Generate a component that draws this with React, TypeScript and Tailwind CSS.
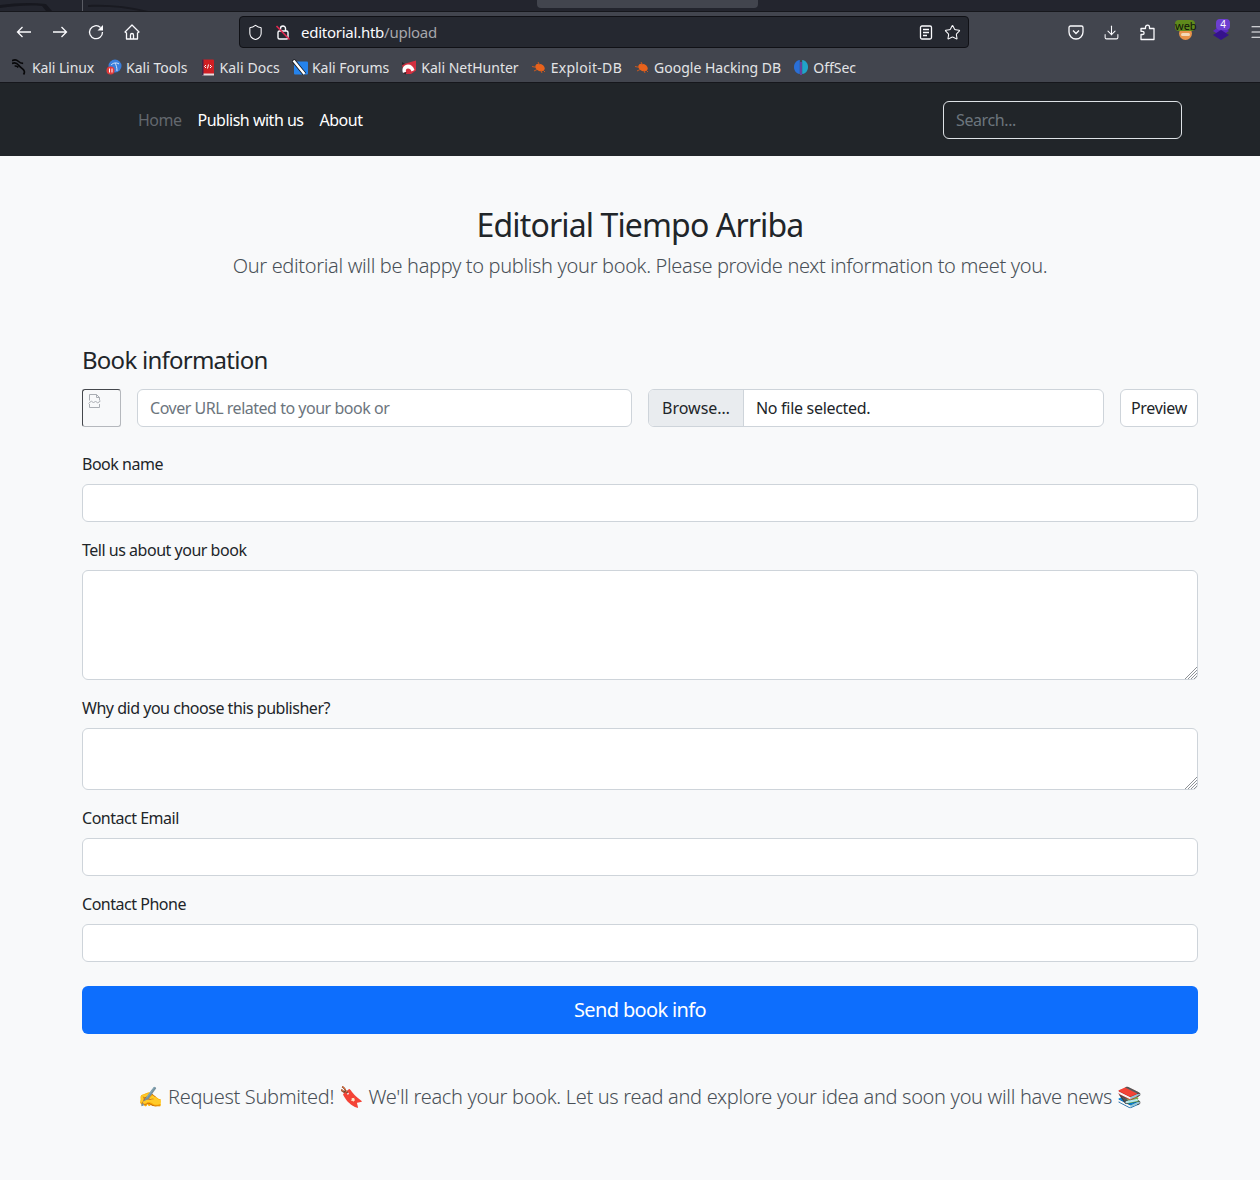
import React from 'react';
import { Shield, Star, Download, Menu } from 'lucide-react';

const uiFont = "font-['Noto_Sans',sans-serif]";

const KaliDragon = () => (
  <svg width="18" height="18" viewBox="0 0 18 18" fill="none">
    <path d="M0 2c2.500-1.500 5.500-1 7 .5 1.500 1.500 3 2.500 5.500 2.500M0 5c3-1.200 5.500-.5 7.500 2 1.500 2.500 4.500 3.500 6 6 .8 1.500.5 3-.5 4.500M3 8c1.500-.3 3 .2 4 1.500" stroke="#08080a" strokeWidth="1.900" />
  </svg>
);

const ToolsIcon = () => (
  <svg width="16" height="16" viewBox="0 0 16 16">
    <circle cx="9" cy="7" r="6.500" fill="#3a7fdc" />
    <path d="M5 6c2-2 5-3 8-1M9 4c1 2 2 4 2 8" stroke="#d6e6fa" strokeWidth="1" fill="none" />
    <circle cx="4.500" cy="11.500" r="4" fill="#e23b3b" />
    <rect x="3" y="9.500" width="1" height="4" fill="#fff" />
    <rect x="5.500" y="9.500" width="1" height="4" fill="#fff" />
  </svg>
);

const DocsIcon = () => (
  <svg width="14" height="17" viewBox="0 0 14 17">
    <rect x="1" y="0.500" width="12" height="15" rx="1" fill="#cf1f24" />
    <rect x="1" y="14.500" width="12" height="2" fill="#e8dcdc" />
    <rect x="1" y="0.500" width="1.500" height="16" fill="#43264a" />
    <path d="M5 6l-1.500 1.500L5 9M9 6l1.500 1.500L9 9M7.500 5.500l-1 4" stroke="#fff" strokeWidth="1" fill="none" />
  </svg>
);

const ForumsIcon = () => (
  <svg width="16" height="17" viewBox="0 0 16 17">
    <rect x="2" y="2.500" width="14" height="13" rx="1" fill="#2583ec" />
    <path d="M1 1l11.500 14" stroke="#16181f" strokeWidth="4" />
    <path d="M1.500 1.500l11 13.500" stroke="#fff" strokeWidth="2.400" />
  </svg>
);

const HunterIcon = () => (
  <svg width="16" height="16" viewBox="0 0 16 16">
    <path d="M1 5.500L15 1.500v10L10 15H3z" fill="#d32f3f" />
    <path d="M2 14c-1.800-4.500 1-8.500 5-8.500 3 0 5.500 2 6.500 5.500l-3 1.500C10 10.800 8.800 9.500 7 9.500c-1.800 0-2.500 1.700-2 3.500z" fill="#fff" />
    <path d="M2 14l2.500 1.500L5.500 13z" fill="#25262c" />
    <path d="M1 3l3 2-3 1z" fill="#25262c" />
  </svg>
);

const BugIcon = () => (
  <svg width="16" height="14" viewBox="0 0 16 14">
    <ellipse cx="9" cy="7.500" rx="5" ry="3.500" fill="#e8621c" transform="rotate(25 9 7.500)" />
    <path d="M1 6.500l4 .8M3 11l3-1.500M7 2l1.500 3M11 13l-1-2.500M14 12l-2-2" stroke="#c9581f" strokeWidth="1" />
  </svg>
);

const OffSecIcon = () => (
  <svg width="16" height="16" viewBox="0 0 16 16">
    <path d="M6.800 1C3 1.500 1 4.500 1 8s2 6.500 5.800 7z" fill="#2a6fd6" />
    <path d="M9.200 1C13 1.500 15 4.500 15 8s-2 6.500-5.800 7z" fill="#21a3c9" />
    <rect x="7.400" y="3" width="1.200" height="13" fill="#7a3fd0" />
  </svg>
);

const Bookmark = ({ icon, label, labelClass }: { icon: React.ReactNode; label: string; labelClass?: string }) => (
  <div className="flex items-center gap-1 text-[14px] text-[#e3e4e6]">
    <span className="flex w-4 h-4 items-center justify-center">{icon}</span>
    <span className={labelClass}>{label}</span>
  </div>
);

const ResizeHandle = () => (
  <svg className="absolute right-[1px] bottom-[1px]" width="12" height="12" viewBox="0 0 12 12" fill="none">
    <path d="M0 12L12 0M3 12l9-9M6 12l6-6M9 12l3-3" stroke="#8d9196" />
  </svg>
);

const BrowserChrome = () => (
  <div className="text-[#fbfbfe]">
    {/* window strip behind the tabs, a bit of wallpaper shows */}
    <div className="h-[11px] bg-[#23252e] relative overflow-hidden">
      <svg className="absolute left-0 top-0" width="160" height="11" viewBox="0 0 160 11" fill="none">
        <path d="M0 5c15-2 30-3 46-1l6 7h-6L42 6C28 5 14 6 0 8z" fill="#17181f" />
        <path d="M88 5c20-1 40 1 60 6h-8C122 7 105 6 88 7z" fill="#191a21" />
      </svg>
      <div className="absolute left-[537px] top-0 w-[221px] h-2 bg-[#42454e] rounded-b" />
      <div className="absolute left-[82px] top-0 w-px h-[11px] bg-[#5a5c64]" />
    </div>
    <div className="h-[39px] pt-[2px] bg-[#42454e] border-t border-[#16171c] flex items-center relative">
      <div className="flex items-center gap-5 pl-4 w-[239px] shrink-0">
        <svg width="16" height="12" viewBox="0 0 16 12" fill="none" stroke="#fbfbfe" strokeWidth="1.300">
          <path d="M15 6H1.500M6.500 1l-5 5 5 5" />
        </svg>
        <svg width="16" height="12" viewBox="0 0 16 12" fill="none" stroke="#fbfbfe" strokeWidth="1.300">
          <path d="M1 6h13.500M9.500 1l5 5-5 5" />
        </svg>
        <svg width="16" height="16" viewBox="0 0 16 16" fill="none">
          <path d="M12.500 3.500A6.500 6.500 0 1 0 14.500 8" stroke="#fbfbfe" strokeWidth="1.300" />
          <path d="M15 1v5.500H9.500z" fill="#fbfbfe" />
        </svg>
        <svg width="16" height="16" viewBox="0 0 16 16" fill="none" stroke="#fbfbfe" strokeWidth="1.300">
          <path d="M1 8l7-7 7 7-1.500 1V15h-11V9zM6.500 15v-4a1.500 1.500 0 0 1 3 0v4" strokeLinejoin="round" />
        </svg>
      </div>
      <div className="w-[730px] h-8 shrink-0 bg-[#252830] border border-[#101116] rounded flex items-center pl-[7px] pr-[7px]">
        <Shield size={17} strokeWidth={1.500} />
        <svg className="ml-[11px]" width="16" height="17" viewBox="0 0 16 17" fill="none">
          <rect x="3" y="7" width="10" height="8" rx="1.500" stroke="#fbfbfe" strokeWidth="1.400" />
          <path d="M5.500 7V4.500a2.500 2.500 0 0 1 5 0V7" stroke="#fbfbfe" strokeWidth="1.400" />
          <path d="M1.500 2l13 13.500" stroke="#e22850" strokeWidth="1.600" />
        </svg>
        <span className="ml-[10px] text-[15px] tracking-[-0.25px] text-[#fbfbfe]">editorial.htb<span className="text-[#a5a6ab]">/upload</span></span>
        <svg className="ml-auto" width="14" height="15" viewBox="0 0 14 15" fill="none">
          <rect x="1.500" y="1" width="11" height="13" rx="1.500" stroke="#fbfbfe" strokeWidth="1.300" />
          <path d="M4 4.500h6M4 7.500h6M4 10.500h4" stroke="#fbfbfe" strokeWidth="1.300" />
        </svg>
        <Star className="ml-[11px]" size={17} strokeWidth={1.500} />
      </div>
      <div className="flex-1 flex items-center pl-[99px] gap-[19px]">
        <svg width="16" height="15" viewBox="0 0 16 15" fill="none">
          <path d="M2.500 1h11A1.500 1.500 0 0 1 15 2.500V7a7 7 0 0 1-14 0V2.500A1.500 1.500 0 0 1 2.500 1z" stroke="#fbfbfe" strokeWidth="1.300" />
          <path d="M5 5.500l3 3 3-3" stroke="#fbfbfe" strokeWidth="1.300" />
        </svg>
        <Download size={17} strokeWidth={1.500} />
        <svg width="17" height="17" viewBox="0 0 17 17" fill="none">
          <path d="M2 15.500v-5h1.500a1.600 1.600 0 0 0 0-3.200H2V4.500h4.500V3.200a2 2 0 0 1 4 0v1.300H15v11z" stroke="#fbfbfe" strokeWidth="1.300" strokeLinejoin="round" />
        </svg>
        <div className="relative w-5 h-5 ml-[1px]">
          <div className="absolute left-[3px] top-[5px] w-[13px] h-[13px] rounded-full bg-[#e8934a]" />
          <div className="absolute left-[5px] top-[11px] w-[9px] h-[3px] rounded-sm bg-[#f4d9b8]" />
          <div className="absolute left-[-1px] top-[-2px] w-5 h-[11px] rounded-sm bg-[#5f8a1c] text-[11px] leading-[11px] text-[#10140a] text-center">web</div>
        </div>
        <div className="relative w-5 h-5 ml-[-3px]">
          <svg className="absolute left-[-1px] top-[3px]" width="20" height="16" viewBox="0 0 20 16">
            <path d="M10 0l8 6-8 5-8-5z" fill="#5a2bc0" />
            <path d="M10 5l8 5-8 5-8-5z" fill="#35128c" />
          </svg>
          <div className="absolute left-[4px] top-[-3px] w-[14px] h-[11px] rounded-sm bg-[#6d3fd0] text-[10px] leading-[11px] text-white text-center">4</div>
        </div>
        <Menu className="ml-[-2px] shrink-0" size={18} strokeWidth={1.500} />
      </div>
    </div>
    <div className="h-[33px] pt-[2px] bg-[#42454e] border-b border-[#16171c] flex items-center pl-3 gap-3">
      <Bookmark icon={<KaliDragon />} label="Kali Linux" labelClass="tracking-[-0.1px]" />
      <Bookmark icon={<ToolsIcon />} label="Kali Tools" />
      <Bookmark icon={<DocsIcon />} label="Kali Docs" labelClass="tracking-[0.1px]" />
      <Bookmark icon={<ForumsIcon />} label="Kali Forums" />
      <Bookmark icon={<HunterIcon />} label="Kali NetHunter" />
      <Bookmark icon={<BugIcon />} label="Exploit-DB" labelClass="tracking-[0.3px]" />
      <Bookmark icon={<BugIcon />} label="Google Hacking DB" />
      <Bookmark icon={<OffSecIcon />} label="OffSec" />
    </div>
  </div>
);

const Field = ({ label, children }: { label: string; children: React.ReactNode }) => (
  <div className="mb-4">
    <label className="block mb-2 text-[16px] leading-6 tracking-[-0.48px] text-[#212529]">{label}</label>
    {children}
  </div>
);

const inputClass = 'block w-full h-[38px] bg-white border border-[#ced4da] rounded-md';

const App: React.FC = () => {
  return (
    <div className="w-[1260px] h-[1180px] overflow-hidden">
      <div className={`w-[1280px] min-h-[1180px] bg-[#f8f9fa] ${uiFont}`}>
        <BrowserChrome />

        <nav className="h-[73px] bg-[#212529] flex items-center pl-[130px] pr-[98px]">
          <div className="flex text-[16px] tracking-[-0.5px]">
            <a className="px-2 text-[#63686e]">Home</a>
            <a className="px-2 text-white">Publish with us</a>
            <a className="px-2 text-white">About</a>
          </div>
          <input
            className="ml-auto w-[239px] h-[38px] px-3 rounded-md border border-[#dee2e6] bg-transparent text-[16px] tracking-[-0.4px] placeholder:text-[#6c757d]"
            placeholder="Search..."
          />
        </nav>

        <div className="text-center pt-[48px]">
          <h1 className="text-[32px] leading-[42px] font-normal tracking-[-0.87px] text-[#212529]">Editorial Tiempo Arriba</h1>
          <p className="text-[20px] leading-[40px] font-light tracking-[-0.34px] text-[#495057]">
            Our editorial will be happy to publish your book. Please provide next information to meet you.
          </p>
        </div>

        <form className="mx-[82px] mt-[58px]">
          <h2 className="text-[24px] leading-[32px] font-normal tracking-[-0.75px] text-[#212529] mb-[13px]">Book information</h2>

          <div className="flex gap-4 mb-[25px]">
            <div className="w-[39px] h-[38px] shrink-0 rounded-[3px] border border-[#b5b8bd] border-l-[#44474c] border-t-[#44474c] pl-[5px] pt-[4px]">
              <svg width="13" height="14" viewBox="0 0 13 14" fill="none">
                <path d="M1.500 6.500V.5h7l3 3v3M1.500 10v3.500h10V10M8.500.5v3h3" stroke="#a9adb3" />
                <path d="M.5 9.500l3-2.500 2 2 2-2 2 2 3-2" stroke="#a9adb3" />
              </svg>
            </div>
            <input className={`${inputClass} !w-[495px] shrink-0 px-3 text-[16px] tracking-[-0.48px] placeholder:text-[#6c757d]`} placeholder="Cover URL related to your book or" />
            <div className="w-[456px] h-[38px] shrink-0 flex items-center bg-white border border-[#ced4da] rounded-md overflow-hidden text-[16px] text-[#212529]">
              <span className="h-full w-[95px] shrink-0 flex items-center justify-center bg-[#e9ecef] border-r border-[#ced4da]">Browse…</span>
              <span className="px-3 tracking-[-0.3px]">No file selected.</span>
            </div>
            <button type="button" className="w-[78px] h-[38px] shrink-0 bg-white border border-[#ced4da] rounded-md text-[16px] tracking-[-0.3px] text-[#212529]">Preview</button>
          </div>

          <Field label="Book name"><input className={inputClass} /></Field>
          <Field label="Tell us about your book">
            <div className="relative">
              <textarea className={`${inputClass} !h-[110px] resize-none`} />
              <ResizeHandle />
            </div>
          </Field>
          <Field label="Why did you choose this publisher?">
            <div className="relative">
              <textarea className={`${inputClass} !h-[62px] resize-none`} />
              <ResizeHandle />
            </div>
          </Field>
          <Field label="Contact Email"><input className={inputClass} /></Field>
          <Field label="Contact Phone"><input className={inputClass} /></Field>

          <button type="button" className="w-full h-12 mt-2 bg-[#0d6efd] rounded-md text-white text-[20px] tracking-[-0.64px]">Send book info</button>
        </form>

        <p className="mt-[48px] text-center text-[20px] leading-[30px] font-light tracking-[-0.32px] text-[#495057]">
          ✍️ Request Submited! 🔖 We'll reach your book. Let us read and explore your idea and soon you will have news 📚
        </p>
      </div>
    </div>
  );
};

export default App;
